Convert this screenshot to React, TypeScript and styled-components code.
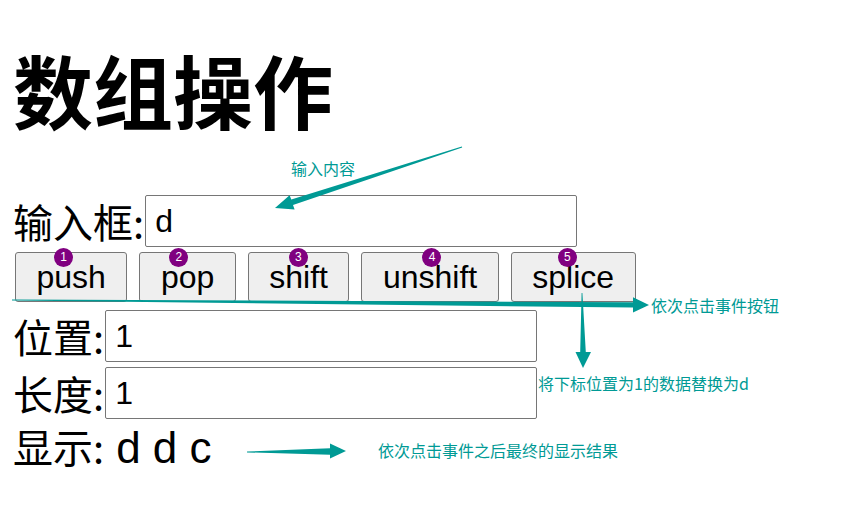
import React from 'react';
import styled, { createGlobalStyle } from 'styled-components';

const GlobalStyle = createGlobalStyle`
  html, body {
    margin: 0;
    padding: 0;
    background: #ffffff;
  }
  body {
    font-family: 'Liberation Sans', 'Noto Sans CJK SC', sans-serif;
    color: #000000;
  }
`;

const TEAL = '#009a95';

const Page = styled.div`
  position: relative;
  width: 867px;
  height: 507px;
  overflow: hidden;
  box-sizing: border-box;
  padding: 48px 0 0 13px;
`;

const Title = styled.h1`
  margin: 0 0 67px;
  font-family: 'Noto Sans CJK SC', sans-serif;
  font-size: 80px;
  line-height: 80px;
  font-weight: 700;
`;

const FieldRow = styled.div<{ $gap: number }>`
  display: flex;
  align-items: center;
  height: 52px;
  margin-top: ${(p) => p.$gap}px;
`;

const Label = styled.span`
  font-family: 'Noto Sans CJK SC', sans-serif;
  font-size: 40px;
  line-height: 52px;
  white-space: nowrap;
`;

const TextInput = styled.input`
  box-sizing: border-box;
  width: 432px;
  height: 52px;
  margin: 0 0 0 1px;
  padding: 0 9px;
  border: 1px solid #767676;
  border-radius: 2px;
  background: #ffffff;
  font-family: 'Liberation Sans', sans-serif;
  font-size: 32px;
  color: #000000;
  outline: none;
`;

const ButtonRow = styled.div`
  display: flex;
  gap: 12px;
  margin-top: 5px;
  padding-left: 2px;
`;

const ActionButton = styled.button`
  position: relative;
  box-sizing: border-box;
  height: 50px;
  margin: 0;
  padding: 0 20.5px;
  border: 1px solid #767676;
  border-radius: 3px;
  background: #efefef;
  font-family: 'Liberation Sans', sans-serif;
  font-size: 32px;
  line-height: 48px;
  color: #000000;
`;

const Badge = styled.span<{ $left: number }>`
  position: absolute;
  top: -5px;
  left: ${(p) => p.$left}px;
  width: 19px;
  height: 19px;
  border-radius: 50%;
  background: #800080;
  color: #ffffff;
  font-family: 'Liberation Sans', sans-serif;
  font-size: 12px;
  line-height: 19px;
  text-align: center;
`;

const DisplayRow = styled.div`
  display: flex;
  align-items: baseline;
  height: 58px;
  line-height: 58px;
`;

const DisplayValue = styled.span`
  margin-left: 12px;
  font-family: 'Liberation Sans', sans-serif;
  font-size: 44px;
`;

const Overlay = styled.svg`
  position: absolute;
  left: 0;
  top: 0;
  pointer-events: none;
`;

const Note = styled.span<{ $x: number; $y: number }>`
  position: absolute;
  left: ${(p) => p.$x}px;
  top: ${(p) => p.$y - 11}px;
  font-family: 'Noto Sans CJK SC', sans-serif;
  font-size: 16px;
  line-height: 22px;
  color: ${TEAL};
  white-space: nowrap;
`;

const actions = [
  { name: 'push', badge: 38 },
  { name: 'pop', badge: 29 },
  { name: 'shift', badge: 40 },
  { name: 'unshift', badge: 60 },
  { name: 'splice', badge: 46 },
];

// annotation arrows drawn over the form
const arrows = [
  '461.8,146.5 291.3,199.6 289.6,195.2 275,208 294.6,209.4 293,205 462.2,147.5',
  '12,299.6 633,302.2 633,297.2 649,305 633,312.6 633,307.6 12,300.4',
  '581.6,293 580.2,352 575.5,352 583,368 591,352 585.8,352 582.4,293',
  '247,451.6 330,448.3 330,443.5 346,451 330,458.5 330,454.7 247,452.4',
];

const App: React.FC = () => {
  return (
    <>
      <GlobalStyle />
      <Page>
        <Title>数组操作</Title>

        <FieldRow $gap={0}>
          <Label>输入框:</Label>
          <TextInput value="d" readOnly />
        </FieldRow>

        <ButtonRow>
          {actions.map((a, i) => (
            <ActionButton key={a.name}>
              <Badge $left={a.badge}>{i + 1}</Badge>
              {a.name}
            </ActionButton>
          ))}
        </ButtonRow>

        <FieldRow $gap={8}>
          <Label>位置:</Label>
          <TextInput value="1" readOnly />
        </FieldRow>

        <FieldRow $gap={5}>
          <Label>长度:</Label>
          <TextInput value="1" readOnly />
        </FieldRow>

        <DisplayRow>
          <Label>显示:</Label>
          <DisplayValue>d d c</DisplayValue>
        </DisplayRow>

        <Overlay width="867" height="507" viewBox="0 0 867 507">
          {arrows.map((pts) => (
            <polygon key={pts} points={pts} fill={TEAL} />
          ))}
        </Overlay>

        <Note $x={291} $y={168}>输入内容</Note>
        <Note $x={651} $y={305}>依次点击事件按钮</Note>
        <Note $x={538} $y={383}>将下标位置为1的数据替换为d</Note>
        <Note $x={378} $y={450}>依次点击事件之后最终的显示结果</Note>
      </Page>
    </>
  );
};

export default App;
